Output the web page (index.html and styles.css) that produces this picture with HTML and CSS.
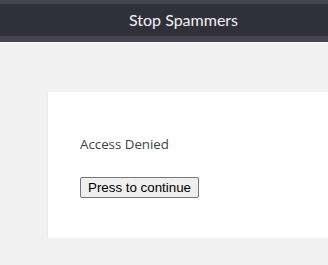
FILE: index.html
```html
<!DOCTYPE html>
<html>
<head>
<meta charset="utf-8">
<link rel="stylesheet" href="styles.css">
</head>
<body>
<header class="topbar">
  <h1 class="topbar-title">Stop Spammers</h1>
</header>
<main class="page">
  <section class="card">
    <p class="message">Access Denied</p>
    <form class="actions">
      <button type="button" class="continue-btn">Press to continue</button>
    </form>
  </section>
</main>
</body>
</html>
```

FILE: styles.css
```css
html, body {
  margin: 0;
  padding: 0;
}
body {
  background: #f1f1f1;
  font-family: "Open Sans", "Liberation Sans", sans-serif;
  width: 328px;
  overflow: hidden;
}
.topbar {
  border-top: 4px solid #45454f;
  border-bottom: 6px solid #45454f;
  background: #30303b;
  height: 32px;
  display: flex;
  align-items: center;
  box-shadow: 0 1px 0 #fafafa;
}
.topbar-title {
  margin: 0 0 0 129px;
  font-family: Lato, "Open Sans", sans-serif;
  font-weight: 400;
  font-size: 16px;
  color: #f2f2f2;
  line-height: 20px;
}
.page {
  padding: 50px 0 0 48px;
}
.card {
  background: #fff;
  box-shadow: 0 1px 2px rgba(0,0,0,0.08);
  padding: 42px 32px 40px;
}
.message {
  margin: 0 0 21px;
  font-size: 13.3px;
  line-height: 20px;
  color: #3c434a;
}
.actions {
  margin: 0;
}
.continue-btn {
  font-family: "Liberation Sans", Arial, sans-serif;
  font-size: 13.333px;
  padding: 1px 7px;
  border: 1px solid #767676;
  border-radius: 2px;
  background: #efefef;
  color: #000;
  height: 21px;
  line-height: 15px;
}
```
